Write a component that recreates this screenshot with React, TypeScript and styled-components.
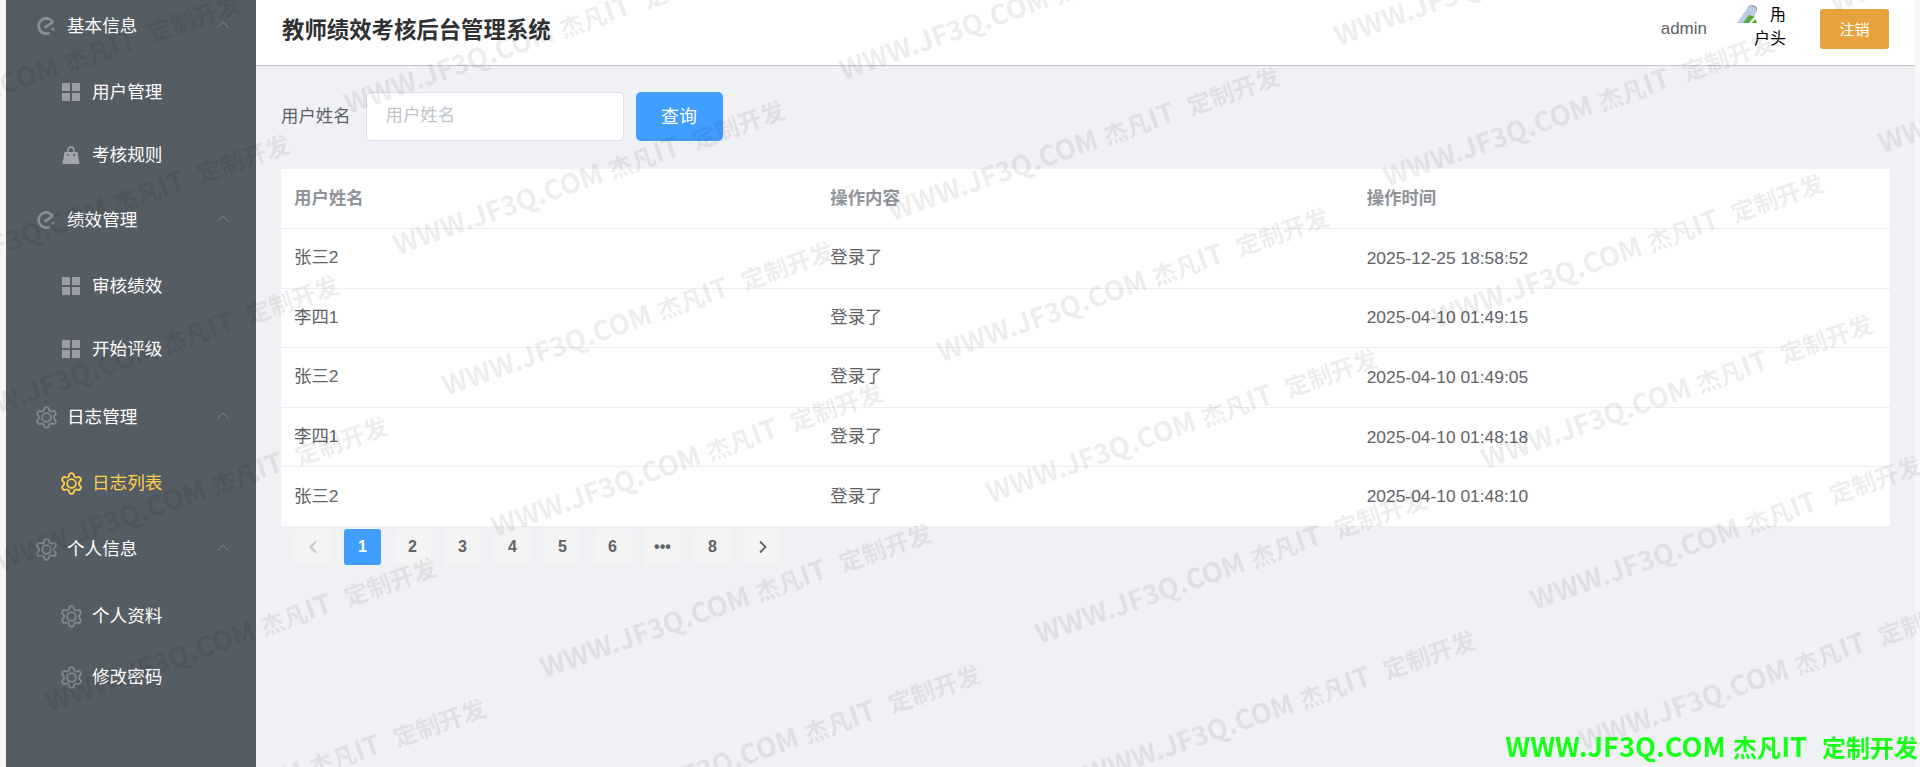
import React from 'react';
import styled, { createGlobalStyle } from 'styled-components';
import { Settings } from 'lucide-react';

const GlobalStyle = createGlobalStyle`
  html, body {
    margin: 0;
    height: 100%;
    overflow: hidden;
    background: #f7f7f7;
    font-family: "Liberation Sans", "Noto Sans CJK SC", sans-serif;
  }
  * {
    box-sizing: border-box;
  }
`;

const Page = styled.div`
  display: flex;
  height: 767px;
  padding: 0 5px 0 6px;
  overflow: hidden;
`;

const Sidebar = styled.aside`
  flex: 0 0 250px;
  background: #545c64;
  overflow: hidden;
`;

const Nav = styled.nav`
  margin-top: -7px;
`;

const NavRow = styled.div<{ $child?: boolean; $active?: boolean; $h: number }>`
  display: flex;
  align-items: flex-start;
  height: ${(p) => p.$h}px;
  padding: 0 27px 0 ${(p) => (p.$child ? 54 : 29)}px;
  line-height: 66px;
  font-size: 17.6px;
  color: ${(p) => (p.$active ? '#ffd04b' : '#fff')};
`;

const NavIcon = styled.span<{ $active?: boolean }>`
  flex: 0 0 22px;
  min-width: 0;
  height: 66px;
  margin-right: 10px;
  display: flex;
  align-items: center;
  justify-content: center;
  color: ${(p) => (p.$active ? '#ffd04b' : '#84888f')};
  svg {
    flex: none;
  }
`;

const Chevron = styled.svg`
  margin-left: auto;
  margin-top: 28px;
`;

const Right = styled.div`
  flex: 1;
  min-width: 0;
  display: flex;
  flex-direction: column;
  background: #f0f1f5;
`;

const Header = styled.header`
  height: 66px;
  flex: none;
  display: flex;
  align-items: center;
  padding: 0 26px 8px 26px;
  background: #fff;
  border-bottom: 1px solid #c4c4c6;
`;

const Title = styled.h1`
  margin: 0 0 2px;
  font-size: 22.4px;
  font-weight: 700;
  color: #303133;
`;

const AdminName = styled.span`
  margin-left: auto;
  font-size: 17px;
  color: #606266;
`;

const Avatar = styled.div`
  flex: none;
  align-self: flex-start;
  width: 54px;
  height: 54px;
  margin: 2px 0 0 29px;
  border-radius: 50%;
  overflow: hidden;
  font-size: 16px;
  line-height: 26px;
  color: #000;
`;

const BrokenIcon = styled.svg`
  display: inline-block;
  vertical-align: top;
  margin: 3px 13px 0 1px;
`;

const AvatarLine = styled.div`
  white-space: nowrap;
  line-height: 22px;
  padding-left: 18px;
`;

const LogoutButton = styled.button`
  width: 69px;
  height: 40px;
  margin-left: 30px;
  border: 0;
  border-radius: 3px;
  background: #e6a23c;
  color: #fff;
  font: inherit;
  font-size: 15px;
`;

const Content = styled.main`
  padding: 25px 25px 0 25px;
`;

const SearchRow = styled.div`
  display: flex;
  align-items: center;
  height: 51px;
`;

const SearchLabel = styled.label`
  font-size: 17.4px;
  color: #606266;
  margin: 0 15px 4px 0;
`;

const SearchInput = styled.input`
  width: 258px;
  height: 49px;
  padding: 0 19px 2px;
  border: 1px solid #dcdfe6;
  border-radius: 5px;
  background: #fff;
  font: inherit;
  font-size: 17.4px;
  color: #606266;
  &::placeholder {
    color: #c0c4cc;
  }
`;

const SearchButton = styled.button`
  width: 87px;
  height: 49px;
  margin-left: 12px;
  padding: 0 0 4px;
  border: 0;
  border-radius: 5px;
  background: #409eff;
  color: #fff;
  font: inherit;
  font-size: 18px;
`;

const LogTable = styled.div`
  margin-top: 27px;
  background: #fff;
`;

const TableRow = styled.div<{ $head?: boolean }>`
  display: grid;
  grid-template-columns: repeat(3, 1fr);
  align-items: center;
  height: ${(p) => (p.$head ? 60 : 59.6)}px;
  border-bottom: 1px solid #ebeef5;
  font-size: 17.4px;
  font-weight: ${(p) => (p.$head ? 700 : 400)};
  color: ${(p) => (p.$head ? '#909399' : '#606266')};
`;

const Cell = styled.div<{ $cjk?: boolean }>`
  padding: 0 13px ${(p) => (p.$cjk ? 5 : 0)}px;
`;

const Pager = styled.div`
  display: flex;
  gap: 13px;
  margin-top: 2px;
  padding-left: 13px;
`;

const PageButton = styled.div<{ $active?: boolean; $off?: boolean }>`
  width: 37px;
  height: 36px;
  display: flex;
  align-items: center;
  justify-content: center;
  border-radius: 3px;
  background: ${(p) => (p.$active ? '#409eff' : '#f4f4f5')};
  color: ${(p) => (p.$active ? '#fff' : p.$off ? '#c0c4cc' : '#606266')};
  font-size: 16px;
  font-weight: 700;
`;

const Watermarks = styled.div`
  position: fixed;
  inset: 0;
  overflow: hidden;
  pointer-events: none;
`;

const Mark = styled.span`
  position: absolute;
  transform: translate(-50%, -50%) rotate(-19.5deg);
  white-space: pre;
  word-spacing: 2px;
  font-family: "Noto Sans CJK SC", sans-serif;
  font-size: 24px;
  font-weight: 700;
  color: rgba(0, 0, 0, 0.07);
`;

const Stamp = styled.div`
  position: fixed;
  right: 2px;
  bottom: 4px;
  white-space: pre;
  word-spacing: 2px;
  font-family: "Noto Sans CJK SC", sans-serif;
  font-size: 24px;
  font-weight: 700;
  line-height: 32px;
  color: #19ff19;
`;

const Latin = styled.span`
  font-size: 27.2px;
`;

const Gear = styled(Settings)`
  circle {
    r: 4.2px;
  }
`;

const marks: { x: number; y: number }[] = [];
for (let i = -3; i <= 5; i++) {
  for (let j = -3; j <= 7; j++) {
    const x = 588 + i * 495 + j * 49;
    const y = 175 - i * 34 + j * 141;
    if (x > -300 && x < 2220 && y > -150 && y < 920) marks.push({ x, y });
  }
}

const MarkText = () => (
  <>
    <Latin>WWW.JF3Q.COM</Latin>
    {' 杰凡'}
    <Latin>IT</Latin>
    {'  定制开发'}
  </>
);

const EIcon = () => (
  <svg width="18" height="18" viewBox="0 0 18 18" fill="none" stroke="#8d9096" strokeWidth="2.6">
    <path d="M16 5.4A7.6 7.6 0 1 0 12.6 15.8" />
    <path d="M7.4 10.6L16 5.4" />
    <circle cx="15.8" cy="12" r="1.5" fill="#8d9096" stroke="none" />
  </svg>
);

const GridIcon = () => (
  <svg width="18" height="18" viewBox="0 0 18 18" fill="#9a9da5">
    <rect x="0" y="0" width="8" height="8" />
    <rect x="10" y="0" width="8" height="8" />
    <rect x="0" y="10" width="8" height="8" />
    <rect x="10" y="10" width="8" height="8" />
  </svg>
);

const BagIcon = () => (
  <svg width="18" height="18" viewBox="0 0 18 18">
    <path d="M2.5 6H15.5L17.5 18H.5Z" fill="#a4a6ad" />
    <path d="M6 9V4.2C6 2.4 7.2 1 9 1S12 2.4 12 4.2V9" fill="none" stroke="#a4a6ad" strokeWidth="1.4" />
    <circle cx="6" cy="9" r="1" fill="#545c64" />
    <circle cx="12" cy="9" r="1" fill="#545c64" />
  </svg>
);

const GearIcon = () => <Gear size={25} strokeWidth={1.7} />;

type NavItem = { label: string; h: number; icon: React.ReactNode; child?: boolean; active?: boolean };

const navItems: NavItem[] = [
  { label: '基本信息', h: 66, icon: <EIcon /> },
  { label: '用户管理', h: 63, icon: <GridIcon />, child: true },
  { label: '考核规则', h: 65, icon: <BagIcon />, child: true },
  { label: '绩效管理', h: 66, icon: <EIcon /> },
  { label: '审核绩效', h: 63, icon: <GridIcon />, child: true },
  { label: '开始评级', h: 68, icon: <GridIcon />, child: true },
  { label: '日志管理', h: 66, icon: <GearIcon /> },
  { label: '日志列表', h: 66, icon: <GearIcon />, child: true, active: true },
  { label: '个人信息', h: 67, icon: <GearIcon /> },
  { label: '个人资料', h: 61, icon: <GearIcon />, child: true },
  { label: '修改密码', h: 66, icon: <GearIcon />, child: true },
];

const logs = [
  ['张三2', '登录了', '2025-12-25 18:58:52'],
  ['李四1', '登录了', '2025-04-10 01:49:15'],
  ['张三2', '登录了', '2025-04-10 01:49:05'],
  ['李四1', '登录了', '2025-04-10 01:48:18'],
  ['张三2', '登录了', '2025-04-10 01:48:10'],
];

const Arrow = ({ left }: { left?: boolean }) => (
  <svg width="10" height="14" viewBox="0 0 10 14" fill="none" stroke="currentColor" strokeWidth="1.8">
    <path d={left ? 'M8 1.5L2.5 7L8 12.5' : 'M2 1.5L7.5 7L2 12.5'} />
  </svg>
);

const App = () => {
  return (
    <>
      <GlobalStyle />
      <Page>
        <Sidebar>
          <Nav>
            {navItems.map((item) => (
              <NavRow key={item.label} $child={item.child} $active={item.active} $h={item.h}>
                <NavIcon $active={item.active}>{item.icon}</NavIcon>
                {item.label}
                {!item.child && (
                  <Chevron width="12" height="7" viewBox="0 0 12 7" fill="none" stroke="#7f858b" strokeWidth="1">
                    <path d="M.5 6.5L6 1L11.5 6.5" />
                  </Chevron>
                )}
              </NavRow>
            ))}
          </Nav>
        </Sidebar>
        <Right>
          <Header>
            <Title>教师绩效考核后台管理系统</Title>
            <AdminName>admin</AdminName>
            <Avatar>
              <BrokenIcon width="20" height="18" viewBox="0 0 20 18">
                <path d="M0 18L11 2L14 0L19 2L20 6L14 18Z" fill="#b9cbe6" />
                <path d="M11 2L14 0L19 2L20 6" fill="none" stroke="#8e8e8e" strokeWidth="1" />
                <path d="M6 18L12 10L18 12L20 18Z" fill="#5aa83c" />
                <path d="M13 18L19 12" stroke="#fff" strokeWidth="2" />
              </BrokenIcon>
              用
              <AvatarLine>户头</AvatarLine>
            </Avatar>
            <LogoutButton>注销</LogoutButton>
          </Header>
          <Content>
            <SearchRow>
              <SearchLabel>用户姓名</SearchLabel>
              <SearchInput placeholder="用户姓名" />
              <SearchButton>查询</SearchButton>
            </SearchRow>
            <LogTable>
              <TableRow $head>
                <Cell $cjk>用户姓名</Cell>
                <Cell $cjk>操作内容</Cell>
                <Cell $cjk>操作时间</Cell>
              </TableRow>
              {logs.map((row, index) => (
                <TableRow key={index}>
                  <Cell $cjk>{row[0]}</Cell>
                  <Cell $cjk>{row[1]}</Cell>
                  <Cell>{row[2]}</Cell>
                </TableRow>
              ))}
            </LogTable>
            <Pager>
              <PageButton $off>
                <Arrow left />
              </PageButton>
              {['1', '2', '3', '4', '5', '6', '•••', '8'].map((label, index) => (
                <PageButton key={label} $active={index === 0}>
                  {label}
                </PageButton>
              ))}
              <PageButton>
                <Arrow />
              </PageButton>
            </Pager>
          </Content>
        </Right>
      </Page>
      <Watermarks>
        {marks.map((m) => (
          <Mark key={`${m.x}-${m.y}`} style={{ left: m.x, top: m.y }}>
            <MarkText />
          </Mark>
        ))}
      </Watermarks>
      <Stamp>
        <MarkText />
      </Stamp>
    </>
  );
};

export default App;
